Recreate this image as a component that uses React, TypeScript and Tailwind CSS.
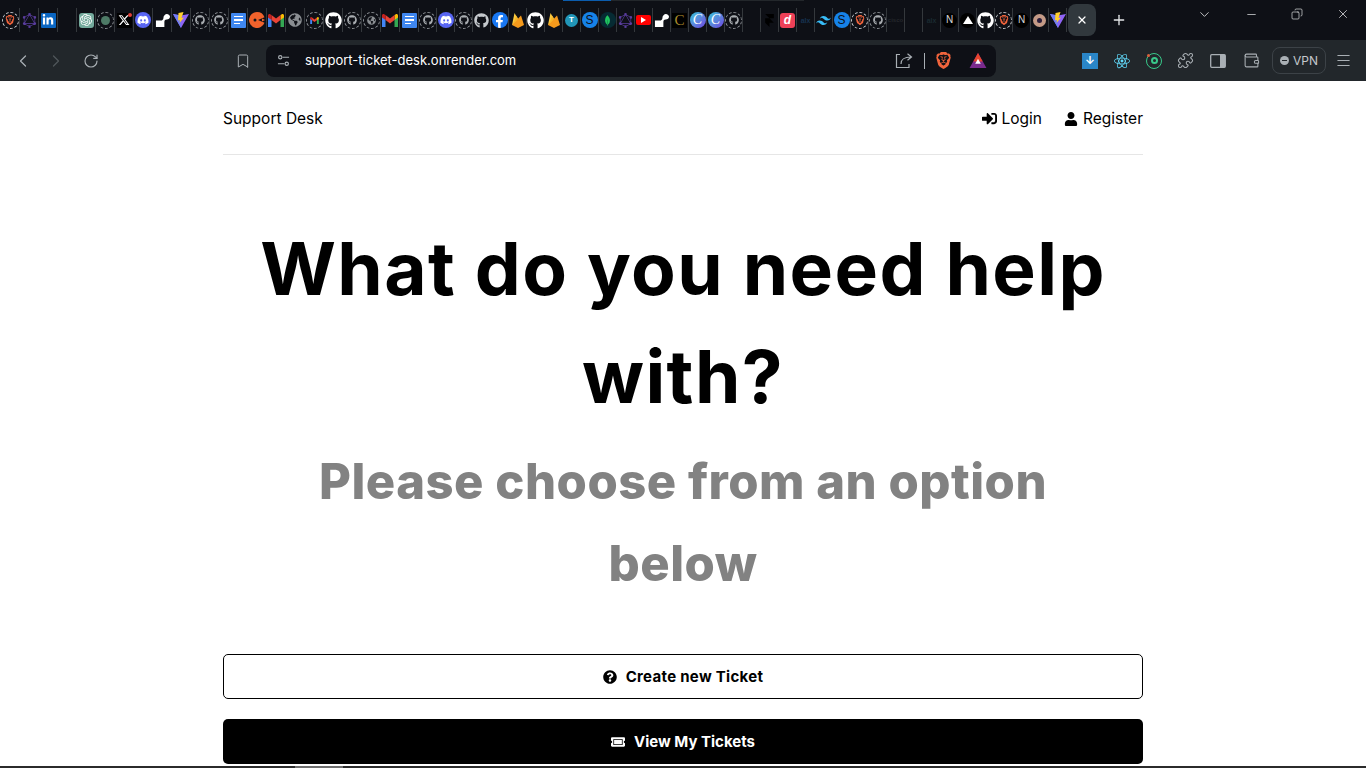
import React from 'react';
import { FaGithub, FaDiscord, FaFacebookF, FaLinkedinIn, FaGlobeAmericas, FaSignInAlt, FaUser, FaQuestionCircle, FaTicketAlt } from 'react-icons/fa';
import { FaXTwitter as XIcon } from 'react-icons/fa6';
import { SiBrave, SiOpenai, SiTailwindcss, SiMongodb, SiFramer, SiGraphql, SiReact } from 'react-icons/si';
import { ChevronLeft, ChevronRight, RotateCw, Bookmark, Puzzle, Wallet, Menu, X, Plus, Minus, ChevronDown, Copy } from 'lucide-react';

type Tab = { kind: string };

const Ring: React.FC<{ children: React.ReactNode }> = ({ children }) => (
  <span className="flex h-[17px] w-[17px] items-center justify-center rounded-full border-[1.5px] border-dashed border-[#8d9196]">
    {children}
  </span>
);

const Square: React.FC<{ className: string; children?: React.ReactNode }> = ({ className, children }) => (
  <span className={`flex h-[15px] w-[15px] items-center justify-center ${className}`}>{children}</span>
);

const Docs = () => (
  <Square className="flex-col items-start gap-[2px] rounded-[1px] bg-[#3f87f0] pl-[3px]">
    <span className="h-[1.5px] w-[9px] bg-white" />
    <span className="h-[1.5px] w-[9px] bg-white" />
    <span className="h-[1.5px] w-[6px] bg-white" />
  </Square>
);

const Render = () => (
  <svg viewBox="0 0 16 16" className="h-[15px] w-[15px]" fill="#fff">
    <path d="M1 8h5c2 0 3-1 3-3 0-2 2-4 3.500-4C14.500 1 16 2.500 16 4s-1.500 3-3.500 3C10.500 7 10 8 10 10v5H1z" />
  </svg>
);

const Gmail: React.FC<{ size: string }> = ({ size }) => (
  <svg viewBox="0 0 16 13" className={size}>
    <path d="M0 2.500 V13 H3.500 V5z" fill="#4285f4" />
    <path d="M16 2.500 V13 H12.500 V5z" fill="#34a853" />
    <path d="M12.500 1 V6 L16 3.500 V1.500 C16 .3 14.500 -.3 13.500 .4z" fill="#fbbc04" />
    <path d="M3.500 1 L8 4.500 12.500 1 V6 L8 9.500 3.500 6z" fill="#ea4335" />
    <path d="M0 1.500 V3.500 L3.500 6 V1 L2.500 .4 C1.500 -.3 0 .3 0 1.500z" fill="#c5221f" />
  </svg>
);

const Vite = () => (
  <svg viewBox="0 0 16 16" className="h-[16px] w-[16px]">
    <path d="M0 2 L8 3.500 16 2 8 16z" fill="#8f63f5" />
    <path d="M0 2 L8 3.500 8 16z" fill="#6f7cf5" />
    <path d="M10.500 0 L5.500 1 5 8.500 7 8 6.500 11 11 5.500 8.500 6z" fill="#ffcf2e" />
  </svg>
);

const Firebase = () => (
  <svg viewBox="0 0 16 16" className="h-[16px] w-[16px]">
    <path d="M2 13 L4.500 1 8 7 5 12z" fill="#fcca3f" />
    <path d="M2 13 L11 3.500 14 13 8 16z" fill="#f59a1c" />
    <path d="M8 7 L6.500 3.500 5 7 3 12z" fill="#f6b62a" />
  </svg>
);

const Orange = () => (
  <svg viewBox="0 0 16 16" className="h-[16px] w-[16px]">
    <path d="M8 0a8 8 0 1 0 7.500 10.800L9 8l6.500-2.800A8 8 0 0 0 8 0z" fill="#f0622c" />
    <circle cx="6" cy="8" r="1.500" fill="#14161a" />
    <path d="M13 6.500l3 1.500-3 1.500z" fill="#f0622c" />
  </svg>
);

const Letter: React.FC<{ className: string; children: React.ReactNode }> = ({ className, children }) => (
  <span className={`flex items-center justify-center rounded-full font-['Liberation_Sans',sans-serif] leading-none ${className}`}>{children}</span>
);

const favicon = (kind: string) => {
  switch (kind) {
    case 'brave': return <span className="flex h-[17px] w-[17px] items-center justify-center rounded-full border-[1.5px] border-dashed border-[#c8ccd0]"><SiBrave className="h-[10px] w-[10px] text-[#f0643c]" /></span>;
    case 'graphql': return <SiGraphql className="h-[15px] w-[15px] text-[#5a3d9e]" />;
    case 'linkedin': return <Square className="rounded-[1px] bg-[#0a66c2] text-white"><FaLinkedinIn className="h-[12px] w-[12px]" /></Square>;
    case 'gpt': return <Square className="rounded-[3px] bg-[#74aa9c] text-white"><SiOpenai className="h-[12px] w-[12px]" /></Square>;
    case 'gptring': return <Ring><span className="h-[9px] w-[9px] rounded-full bg-[#4d7a66]" /></Ring>;
    case 'x': return <Square className="relative bg-black text-white"><XIcon className="h-[12px] w-[12px]" /><span className="absolute right-0 top-0 h-[4px] w-[4px] rounded-full bg-[#e0403a]" /></Square>;
    case 'discord': return <span className="flex h-[16px] w-[16px] items-center justify-center rounded-full bg-[#5865f2] text-white"><FaDiscord className="h-[12px] w-[12px]" /></span>;
    case 'render': return <Render />;
    case 'vite': return <Vite />;
    case 'ghring': return <Ring><FaGithub className="h-[10px] w-[10px] text-[#a8acb0]" /></Ring>;
    case 'docs': return <Docs />;
    case 'orange': return <Orange />;
    case 'gmail': return <Gmail size="h-[13px] w-[16px]" />;
    case 'globe': return <FaGlobeAmericas className="h-[14px] w-[14px] text-[#8a8e92]" />;
    case 'gmailring': return <Ring><Gmail size="h-[7px] w-[9px]" /></Ring>;
    case 'github': return <FaGithub className="h-[17px] w-[17px] text-white" />;
    case 'githubdim': return <FaGithub className="h-[15px] w-[15px] text-[#c4c8cc]" />;
    case 'globering': return <Ring><FaGlobeAmericas className="h-[9px] w-[9px] text-[#8a8e92]" /></Ring>;
    case 'facebook': return <span className="flex h-[16px] w-[16px] items-end justify-center overflow-hidden rounded-full bg-[#1877f2] text-white"><FaFacebookF className="h-[13px] w-[13px]" /></span>;
    case 'firebase': return <Firebase />;
    case 'teal': return <Letter className="h-[13px] w-[13px] bg-[#2196b8] text-[8px] font-bold text-white">T</Letter>;
    case 'simplenote': return <Letter className="h-[16px] w-[16px] bg-[#1682e8] text-[12px] text-[#0e1016]">S</Letter>;
    case 'mongo': return <span className="flex h-[16px] w-[16px] items-center justify-center rounded-full bg-[#062b33] text-[#1fc45f]"><SiMongodb className="h-[11px] w-[11px]" /></span>;
    case 'youtube': return <span className="flex h-[10px] w-[15px] items-center justify-center rounded-[2px] bg-[#ff0000]"><span className="h-0 w-0 border-y-[3px] border-l-[5px] border-y-transparent border-l-white" /></span>;
    case 'ccc': return <Square className="bg-black font-['Liberation_Serif',serif] text-[15px] leading-none text-[#a88a2c]">C</Square>;
    case 'canva': return <span className="flex h-[16px] w-[16px] items-center justify-center rounded-full bg-gradient-to-br from-[#19c3d6] to-[#6b3be0] font-['Liberation_Serif',serif] text-[14px] italic leading-none text-white">C</span>;
    case 'framer': return <SiFramer className="h-[13px] w-[13px] text-black" />;
    case 'dribbble': return <Square className="rounded-[3px] bg-[#ee4057] font-['Liberation_Sans',sans-serif] text-[12px] font-bold italic leading-none text-white">d</Square>;
    case 'alx': return <span className="font-['Liberation_Sans',sans-serif] text-[7px] font-bold leading-none text-[#16324f]">alx</span>;
    case 'alxdim': return <span className="font-['Liberation_Sans',sans-serif] text-[7px] font-bold leading-none text-[#1a2a30]">alx</span>;
    case 'tailwind': return <SiTailwindcss className="h-[15px] w-[15px] text-[#38bdf8]" />;
    case 'cisco': return <span className="font-['Liberation_Sans',sans-serif] text-[6px] font-bold leading-[6px] text-[#24272c]">cisco</span>;
    case 'next': return <Letter className="h-[15px] w-[15px] bg-black text-[10px] text-[#d8d8d8]">N</Letter>;
    case 'vercel': return <span className="flex h-[15px] w-[15px] items-center justify-center rounded-full bg-black"><span className="h-0 w-0 border-x-[5px] border-b-[8px] border-x-transparent border-b-white" /></span>;
    case 'donut': return <span className="flex h-[13px] w-[13px] items-center justify-center rounded-full bg-[#c49a86]"><span className="h-[5px] w-[5px] rounded-full bg-[#2b1d3a]" /></span>;
    default: return null;
  }
};

const wideTabs: Tab[] = ['brave', 'graphql', 'linkedin', '', 'gpt', 'gptring', 'x', 'discord', 'render', 'vite', 'ghring', 'ghring', 'docs', 'orange', 'gmail', 'globe', 'gmailring', 'github', 'ghring', 'globering', 'gmail', 'docs'].map((kind) => ({ kind }));
const narrowTabs: Tab[] = ['ghring', 'discord', 'ghring', 'githubdim', 'facebook', 'firebase', 'github', 'firebase', 'teal', 'simplenote', 'mongo', 'graphql', 'youtube', 'render', 'ccc', 'canva', 'canva', 'ghring', '', 'framer', 'dribbble', 'alx', 'tailwind', 'simplenote', 'brave', 'ghring', 'cisco', '', 'alxdim', 'next', 'vercel', 'github', 'brave', 'next', 'donut', 'vite'].map((kind) => ({ kind }));

const TabStrip = () => (
  <div className="relative flex h-[40px] items-center bg-[#0e1016] pl-[1px]">
    <span className="absolute left-[563px] top-0 h-[1px] w-[48px] bg-[#0b5cad]" />
    <span className="absolute left-[611px] top-0 h-[1px] w-[193px] bg-[#23272b]" />
    <div className="flex h-[40px] items-center">
      {wideTabs.map((t, i) => (
        <div key={i} className="flex h-[24px] w-[19px] items-center justify-center border-r border-[#34383c]">
          {favicon(t.kind)}
        </div>
      ))}
      {narrowTabs.map((t, i) => (
        <div key={i} className="flex h-[24px] w-[18px] items-center justify-center border-r border-[#34383c]">
          {favicon(t.kind)}
        </div>
      ))}
    </div>
    <div className="ml-[1px] flex h-[32px] w-[28px] items-center justify-center rounded-[8px] bg-[#31383d] text-white">
      <X size={12} strokeWidth={2.5} />
    </div>
    <Plus size={16} strokeWidth={2} className="ml-[15px] text-[#e6e8ea]" />
    <div className="ml-auto flex items-center pb-[12px] text-[#f2f3f4]">
      <ChevronDown size={15} strokeWidth={1.25} className="mr-[33px]" />
      <Minus size={13} strokeWidth={1.25} className="mr-[33px]" />
      <Copy size={12} strokeWidth={1.25} className="mr-[33px] -scale-x-100" />
      <X size={14} strokeWidth={1.25} className="mr-[16px]" />
    </div>
  </div>
);

const Toolbar = () => (
  <div className="flex h-[41px] items-center bg-[#22272b] text-[#a9afb4]">
    <ChevronLeft size={20} strokeWidth={1.5} className="ml-[13px]" />
    <ChevronRight size={20} strokeWidth={1.5} className="ml-[13px] text-[#50565a]" />
    <RotateCw size={16} strokeWidth={1.75} className="ml-[17px]" />
    <Bookmark size={16} strokeWidth={1.5} className="ml-[136px]" />
    <div className="ml-[15px] flex h-[32px] w-[730px] items-center rounded-[8px] bg-[#0e1016] pl-[11px]">
      <svg viewBox="0 0 14 14" className="h-[13px] w-[13px]" fill="none" stroke="currentColor" strokeWidth="1.2">
        <circle cx="3.500" cy="3.500" r="1.800" />
        <path d="M6 3.500h7M1 10.500h7" />
        <circle cx="10.500" cy="10.500" r="1.800" />
      </svg>
      <span className="ml-[15px] font-['Inter',sans-serif] text-[13px] text-white">support-ticket-desk.onrender.com</span>
      <svg viewBox="0 0 18 16" className="ml-auto h-[16px] w-[18px]" fill="none" stroke="currentColor" strokeWidth="1.2">
        <path d="M5 1.500H1.500V14.500H14V11" />
        <path d="M6 11c0-5 3-7 10-7M12.500 .8L16.500 4l-4 3.200" />
      </svg>
      <span className="ml-[11px] h-[16px] w-px bg-[#a9afb4]" />
      <SiBrave className="ml-[10px] h-[17px] w-[17px] text-[#f0643c]" />
      <svg viewBox="0 0 18 16" className="ml-[17px] mr-[9px] h-[15px] w-[18px]">
        <path d="M9 0L18 16H0z" fill="#7a2a8c" />
        <path d="M9 0L14 9H4z" fill="#e8442c" />
        <path d="M9 6l3 5.500H6z" fill="#fff" />
      </svg>
    </div>
    <span className="ml-[86px] flex h-[16px] w-[16px] items-center justify-center bg-[#2a86c8] text-[11px] font-bold leading-none text-white">↓</span>
    <SiReact className="ml-[16px] h-[16px] w-[16px] text-[#61dafb]" />
    <span className="relative ml-[16px] flex h-[16px] w-[16px] items-center justify-center rounded-full border-[1.5px] border-[#38c98a]">
      <span className="h-[7px] w-[7px] rounded-full border-2 border-[#38c98a]" />
      <span className="absolute left-0 top-0 h-[3px] w-[3px] rounded-full bg-[#e0603a]" />
    </span>
    <Puzzle size={17} strokeWidth={1.5} className="ml-[15px]" />
    <svg viewBox="0 0 16 14" className="ml-[16px] h-[14px] w-[16px]" fill="none" stroke="currentColor" strokeWidth="1.3">
      <rect x=".7" y=".7" width="14.600" height="12.600" rx="1" />
      <rect x="10" y="1" width="5" height="12" fill="currentColor" stroke="none" />
    </svg>
    <Wallet size={17} strokeWidth={1.5} className="ml-[17px]" />
    <div className="ml-[12px] flex h-[27px] w-[54px] items-center justify-center gap-[4px] rounded-[8px] border border-[#3c4247] font-['Inter',sans-serif] text-[12px] text-[#c4c8cc]">
      <span className="flex h-[9px] w-[9px] items-center justify-center rounded-full bg-[#a9afb4]"><span className="h-px w-[5px] bg-[#22272b]" /></span>
      VPN
    </div>
    <Menu size={17} strokeWidth={1.5} className="ml-[9px]" />
  </div>
);

export default function App() {
  return (
    <div className="flex h-screen flex-col overflow-hidden bg-white font-['Inter',sans-serif] text-black">
      <TabStrip />
      <Toolbar />
      <main className="mx-auto flex w-[920px] flex-1 flex-col">
        <header className="flex h-[74px] items-center justify-between border-b border-[#e6e6e6] pt-[2px] text-[15.500px]">
          <span>Support Desk</span>
          <div className="flex items-center gap-[22px]">
            <span className="flex items-center gap-[4px]"><FaSignInAlt className="h-[15px] w-[15px]" />Login</span>
            <span className="flex items-center gap-[5px]"><FaUser className="h-[14px] w-[14px]" />Register</span>
          </div>
        </header>
        <section className="mt-[60px] text-center">
          <h1 className="px-[20px] text-[73px] font-bold leading-[108px] tracking-[1.4px]">What do you need help with?</h1>
          <p className="mt-[10px] px-[80px] text-[49px] font-extrabold leading-[82px] tracking-[0.5px] text-[#828282]">Please choose from an option below</p>
        </section>
        <button className="mt-[49px] flex h-[45px] items-center justify-center gap-[9px] rounded-[5px] border border-black pt-[1px] text-[15px] font-bold tracking-[0.3px]">
          <FaQuestionCircle className="h-[14px] w-[14px]" />Create new Ticket
        </button>
        <button className="mt-[20px] flex h-[45px] items-center justify-center gap-[9px] rounded-[5px] bg-black pt-[1px] text-[15px] font-bold text-white">
          <FaTicketAlt className="h-[14px] w-[14px]" />View My Tickets
        </button>
      </main>
      <div className="flex h-[2px] bg-[#2b2b2b]">
        <span className="ml-[295px] w-[48px] bg-[#6e6e6e]" />
      </div>
    </div>
  );
}
